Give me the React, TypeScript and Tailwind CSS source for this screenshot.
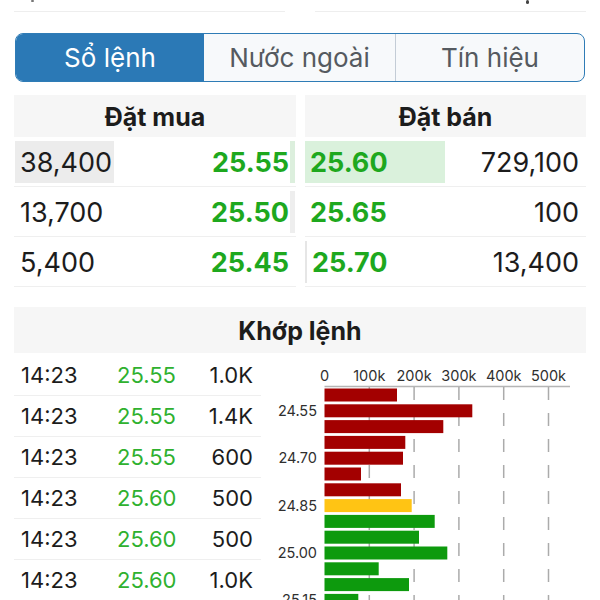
import React from "react";

const bids = [
  { qty: "38,400", price: "25.55", qtyBg: "bg-[#ececec]", strip: "bg-[#dcefdd]" },
  { qty: "13,700", price: "25.50", qtyBg: "", strip: "bg-[#eeeeee]" },
  { qty: "5,400", price: "25.45", qtyBg: "", strip: "" },
];

const asks = [
  { price: "25.60", qty: "729,100", bg: "bg-[#daf1dc]", strip: "" },
  { price: "25.65", qty: "100", bg: "", strip: "" },
  { price: "25.70", qty: "13,400", bg: "", strip: "border-l-2 border-[#e6e6e6]" },
];

const trades = [
  ["14:23", "25.55", "1.0K"],
  ["14:23", "25.55", "1.4K"],
  ["14:23", "25.55", "600"],
  ["14:23", "25.60", "500"],
  ["14:23", "25.60", "500"],
  ["14:23", "25.60", "1.0K"],
];

const barRights = [397, 472.3, 443.3, 405.3, 403, 361, 401, 411.7, 434.7, 419, 447.3, 378.7, 409, 358.3];
const barColor = (i: number) => (i < 7 ? "#a30000" : i === 7 ? "#ffc414" : "#0d9a0d");

function Chart() {
  const ox = 262;
  const oy = 355;
  const x0 = 324.5 - ox;
  const step = 44.8;
  const ticks = ["0", "100k", "200k", "300k", "400k", "500k"];
  const yLabels: [number, string][] = [
    [1, "24.55"],
    [4, "24.70"],
    [7, "24.85"],
    [10, "25.00"],
    [13, "25.15"],
  ];
  const barTop = (i: number) => 388.5 - oy + i * 15.8;
  return (
    <svg width={338} height={245} className="block shrink-0">
      {ticks.map((t, i) => (
        <text
          key={t}
          x={x0 + i * step}
          y={25.7}
          textAnchor="middle"
          fontSize={14.5}
          fill="#2f2f2f"
          fontFamily="Inter, sans-serif"
        >
          {t}
        </text>
      ))}
      <line x1={x0} y1={31.5} x2={308} y2={31.5} stroke="#b5b5b5" strokeWidth={1.5} />
      {[1, 2, 3, 4, 5].map((i) => (
        <line
          key={i}
          x1={x0 + i * step}
          y1={32}
          x2={x0 + i * step}
          y2={245}
          stroke="#ababab"
          strokeWidth={1.5}
          strokeDasharray="13 13"
        />
      ))}
      {barRights.map((r, i) => (
        <rect key={i} x={x0} y={barTop(i)} width={r - 324.5} height={13} fill={barColor(i)} />
      ))}
      {yLabels.map(([i, l]) => (
        <text
          key={l}
          x={55}
          y={barTop(i) + 6.5 + 5}
          textAnchor="end"
          fontSize={14.5}
          fill="#2f2f2f"
          fontFamily="Inter, sans-serif"
        >
          {l}
        </text>
      ))}
    </svg>
  );
}

export default function App() {
  return (
    <div className="w-[600px] h-[600px] overflow-hidden bg-white text-[#1c1c1c] font-['Inter','Liberation_Sans',sans-serif]">
      {/* cut-off row at top */}
      <div className="flex h-[12px] px-[14px] gap-[30px]">
        <div className="relative w-[271px] border-b border-[#eeeeee]">
          <span className="absolute left-[17px] top-0 w-[3px] h-[2px] rounded-full bg-[#777777]" />
        </div>
        <div className="relative flex-1 border-b border-[#eeeeee]">
          <span className="absolute left-[211px] top-0 w-[3px] h-[4px] rounded-full bg-[#444444]" />
        </div>
      </div>

      {/* segmented control */}
      <div className="mt-[21px] mx-[15px] h-[49px] flex rounded-[8px] border-[1.5px] border-[#2f7cb6] overflow-hidden bg-[#f7f9fb] text-[26px]">
        <div className="w-[188px] bg-[#2b79b6] text-white flex items-center justify-center">Sổ lệnh</div>
        <div className="w-[191px] flex items-center justify-center text-[#555a60]">Nước ngoài</div>
        <div className="flex-1 border-l border-[#c3ccd6] flex items-center justify-center text-[#555a60]">
          Tín hiệu
        </div>
      </div>

      {/* order book */}
      <div className="mt-[13px] flex px-[14px] gap-[9px]">
        <div className="w-[282px]">
          <div className="h-[42px] pt-[3px] bg-[#f6f6f6] flex items-center justify-center font-bold text-[25px]">
            Đặt mua
          </div>
          {bids.map((b, i) => (
            <div key={i} className="h-[50px] border-b border-[#efefef] flex items-center">
              <div className={`w-[99px] h-[42px] ml-[1px] pl-[5px] pt-[4px] flex items-center text-[27px] ${b.qtyBg}`}>
                {b.qty}
              </div>
              <div className="flex-1 h-[42px] pt-[4px] flex items-center justify-end font-bold text-[27px] text-[#1ea81e]">
                {b.price}
              </div>
              <div className={`w-[5px] h-[42px] ml-[1px] mr-[1px] ${b.strip}`} />
            </div>
          ))}
        </div>
        <div className="w-[281px]">
          <div className="h-[42px] pt-[3px] bg-[#f6f6f6] flex items-center justify-center font-bold text-[25px]">
            Đặt bán
          </div>
          {asks.map((a, i) => (
            <div key={i} className="h-[50px] border-b border-[#efefef] flex items-center">
              <div
                className={`w-[140px] h-[42px] pl-[5px] pt-[4px] flex items-center font-bold text-[27px] text-[#1ea81e] ${a.bg} ${a.strip}`}
              >
                {a.price}
              </div>
              <div className="flex-1 h-[42px] pt-[4px] flex items-center justify-end pr-[7px] text-[27px]">{a.qty}</div>
            </div>
          ))}
        </div>
      </div>

      {/* matched orders */}
      <div className="mt-[20px] mx-[14px] h-[46px] pt-[3px] bg-[#f6f6f6] flex items-center justify-center font-bold text-[25px]">
        Khớp lệnh
      </div>
      <div className="mt-[2px] flex">
        <div className="ml-[14px] w-[247px] shrink-0">
          {trades.map((t, i) => (
            <div key={i} className="h-[41px] border-b border-[#efefef] flex items-center text-[22px]">
              <div className="w-[103px] pl-[7px]">{t[0]}</div>
              <div className="w-[80px] text-[#2fb12f]">{t[1]}</div>
              <div className="flex-1 text-right pr-[8px]">{t[2]}</div>
            </div>
          ))}
        </div>
        <div className="ml-[1px]">
          <Chart />
        </div>
      </div>
    </div>
  );
}
